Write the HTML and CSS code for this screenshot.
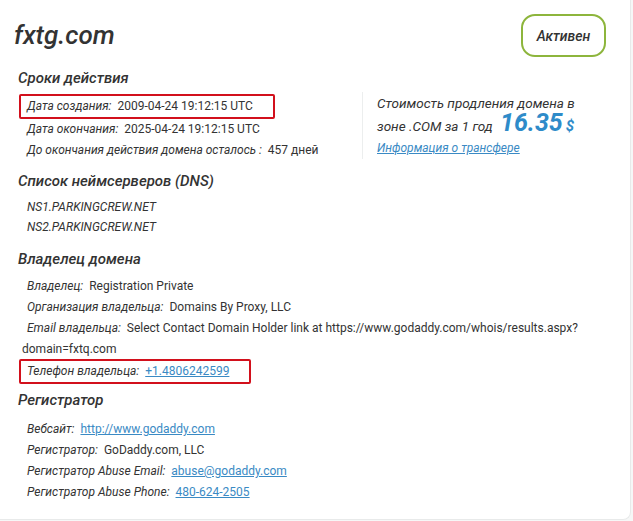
FILE: index.html
```html
<!DOCTYPE html>
<html lang="ru">
<head>
  <meta charset="UTF-8">
  <title>fxtg.com — Whois</title>
  <link rel="stylesheet" href="styles.css">
</head>
<body>
<div class="card">
  <!-- Header -->
  <div class="card-head">
    <h1 class="domain">fxtg.com</h1>
    <span class="status">Активен</span>
  </div>

  <!-- Dates + price -->
  <div class="top-row">
    <div class="section">
      <h2>Сроки действия</h2>
      <div class="row marked"><span class="label">Дата создания:</span> 2009-04-24 19:12:15 UTC</div>
      <div class="row"><span class="label">Дата окончания:</span> 2025-04-24 19:12:15 UTC</div>
      <div class="row"><span class="label">До окончания действия домена осталось :</span> 457 дней</div>
    </div>
    <div class="price">
      <p class="price-text">Стоимость продления домена в зоне .COM за 1 год <span class="sum">16.35</span><span class="cur">$</span></p>
      <a href="#" class="price-link">Информация о трансфере</a>
    </div>
  </div>

  <div class="section">
    <h2>Список неймсерверов (DNS)</h2>
    <div class="row ns">NS1.PARKINGCREW.NET</div>
    <div class="row ns">NS2.PARKINGCREW.NET</div>
  </div>

  <div class="section owner">
    <h2>Владелец домена</h2>
    <div class="row"><span class="label">Владелец:</span> Registration Private</div>
    <div class="row"><span class="label">Организация владельца:</span> Domains By Proxy, LLC</div>
    <div class="row wrap"><span class="label">Email владельца:</span> Select Contact Domain Holder link at https://www.godaddy.com/whois/results.aspx?<wbr>domain=fxtq.com</div>
    <div class="row marked phone"><span class="label">Телефон владельца:</span> <a href="#">+1.4806242599</a></div>
  </div>

  <div class="section registrar">
    <h2>Регистратор</h2>
    <div class="row"><span class="label">Вебсайт:</span> <a href="#">http://www.godaddy.com</a></div>
    <div class="row"><span class="label">Регистратор:</span> GoDaddy.com, LLC</div>
    <div class="row"><span class="label">Регистратор Abuse Email:</span> <a href="#">abuse@godaddy.com</a></div>
    <div class="row"><span class="label">Регистратор Abuse Phone:</span> <a href="#">480-624-2505</a></div>
  </div>
</div>
</body>
</html>
```

FILE: styles.css
```css
/* Basic styling */
body {
  font-family: Roboto, "Noto Sans", sans-serif;
  background: #f6f7f7;
  color: #333;
  margin: 0;
}
.card {
  box-sizing: border-box;
  width: 631px;
  height: 520px;
  background: #fff;
  border-right: 1px solid #e8eaea;
  border-bottom: 1px solid #e8eaea;
  border-bottom-right-radius: 8px;
  padding: 14px 24px 0 18px;
}
.card-head {
  display: flex;
  justify-content: space-between;
  align-items: center;
}
.domain {
  margin: 0 0 0 -4px;
  font-size: 26px;
  font-style: italic;
  font-weight: 500;
  line-height: 43px;
}
.status {
  box-sizing: border-box;
  width: 85px;
  height: 43px;
  border: 2px solid #8db53c;
  border-radius: 14px;
  display: flex;
  align-items: center;
  justify-content: center;
  font-size: 14px;
  font-style: italic;
  font-weight: 500;
}
h2 {
  margin: 0 0 5px;
  font-size: 15px;
  font-style: italic;
  font-weight: 500;
  line-height: 22px;
}
.top-row {
  display: flex;
  justify-content: space-between;
  margin-top: 10px;
}
.section {
  margin-bottom: 9px;
}
.owner {
  margin-top: 11px;
}
.owner h2 {
  margin-bottom: 6px;
}
.registrar h2 {
  margin-bottom: 8px;
}
.row {
  font-size: 12px;
  line-height: 21px;
  padding-left: 9px;
  white-space: nowrap;
}
.row.wrap {
  white-space: normal;
  width: 560px;
  padding-left: 4px;
  text-indent: 5px;
}
.label {
  font-style: italic;
  margin-right: 3px;
}
.ns {
  font-style: italic;
  line-height: 20px;
}
.ns:first-of-type {
  margin-top: 1px;
}
.marked {
  display: inline-block;
  border: 2px solid #d2101c;
  border-radius: 2px;
  margin-left: 1px;
  padding: 0 20px 0 6px;
}
.phone {
  margin-top: -1px;
  margin-bottom: -4px;
}
a {
  color: #3a8ac4;
}
.price {
  box-sizing: border-box;
  width: 244px;
  height: 67px;
  margin-top: 25px;
  border-left: 1px solid #eceeee;
  padding-left: 14px;
}
.price-text {
  width: 210px;
  margin: 0;
  font-size: 13.5px;
  font-style: italic;
  line-height: 22px;
}
.sum {
  color: #2e8bc9;
  font-size: 25px;
  font-weight: bold;
  margin-left: 4px;
  line-height: 18px;
}
.cur {
  color: #2e8bc9;
  font-size: 15px;
  font-weight: bold;
  margin-left: 3px;
}
.price-link {
  font-size: 12px;
  font-style: italic;
  line-height: 20px;
}
```
